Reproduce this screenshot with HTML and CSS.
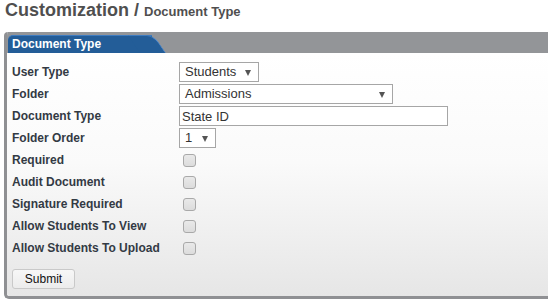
FILE: index.html
```html
<!DOCTYPE html>
<html>
<head>
<meta charset="utf-8">
<link rel="stylesheet" href="styles.css">
</head>
<body>
<h1 class="page-title">Customization / <span class="sub">Document Type</span></h1>
<div class="panel">
  <div class="panel-head"><div class="tab">Document Type</div></div>
  <div class="panel-body">
    <div class="form-grid">
      <label class="lbl">User Type</label>
      <div class="ctl"><span class="select w-students"><span class="sel-text">Students</span></span></div>
      <label class="lbl">Folder</label>
      <div class="ctl"><span class="select w-folder"><span class="sel-text">Admissions</span></span></div>
      <label class="lbl">Document Type</label>
      <div class="ctl"><input class="text-input" type="text" value="State ID"></div>
      <label class="lbl">Folder Order</label>
      <div class="ctl"><span class="select w-order"><span class="sel-text">1</span></span></div>
      <label class="lbl">Required</label>
      <div class="ctl"><input class="chk" type="checkbox"></div>
      <label class="lbl">Audit Document</label>
      <div class="ctl"><input class="chk" type="checkbox"></div>
      <label class="lbl">Signature Required</label>
      <div class="ctl"><input class="chk" type="checkbox"></div>
      <label class="lbl">Allow Students To View</label>
      <div class="ctl"><input class="chk" type="checkbox"></div>
      <label class="lbl">Allow Students To Upload</label>
      <div class="ctl"><input class="chk" type="checkbox"></div>
    </div>
    <button class="submit" type="button">Submit</button>
  </div>
</div>
</body>
</html>
```
FILE: styles.css
```css
html, body {
  margin: 0;
  padding: 0;
  background: #ffffff;
  font-family: "Liberation Sans", Arial, sans-serif;
  overflow: hidden;
}

.page-title {
  margin: 0;
  padding: 0 0 0 5px;
  height: 32px;
  font-size: 18px;
  line-height: 21px;
  font-weight: bold;
  color: #4f4f4f;
}

.page-title .sub {
  font-size: 13px;
}

.panel {
  margin-left: 4px;
  border-left: 3px solid #8f9093;
  border-bottom: 3px solid #8f9093;
  border-radius: 4px 0 0 5px;
  overflow: hidden;
}

.panel-head {
  height: 21px;
  background: #939598;
  display: flex;
  align-items: flex-end;
  padding-left: 1px;
}

.tab {
  position: relative;
  height: 17px;
  width: 140px;
  background: #235d98;
  border-top: 1px solid #3f7cc0;
  border-radius: 5px 0 0 0;
  color: #ffffff;
  font-size: 12px;
  font-weight: bold;
  line-height: 17px;
  padding-left: 4px;
}

.tab::after {
  content: "";
  position: absolute;
  top: -1px;
  right: -14px;
  width: 26px;
  height: 18px;
  background: #235d98;
  border-top: 1px solid #3f7cc0;
  border-right: 1px solid #4d8ad0;
  border-radius: 0 8px 0 0;
  transform: skewX(34deg);
  transform-origin: bottom left;
  box-sizing: border-box;
}

.panel-body {
  background: linear-gradient(to bottom, #ffffff 0%, #fafafa 45%, #e6e6e6 100%);
  padding: 9px 0 7px 5px;
}

.form-grid {
  display: grid;
  grid-template-columns: 167px 1fr;
  grid-auto-rows: 20px;
  row-gap: 2px;
  align-items: center;
}

.lbl {
  font-size: 12px;
  font-weight: bold;
  color: #333a44;
  white-space: nowrap;
}

.ctl {
  display: flex;
  align-items: center;
  height: 20px;
}

.select {
  position: relative;
  display: block;
  box-sizing: border-box;
  height: 20px;
  border: 1px solid #a6a6a6;
  background: #ffffff;
  font-size: 13px;
  line-height: 18px;
  color: #333333;
  padding-left: 5px;
}

.select::after {
  content: "";
  position: absolute;
  right: 7px;
  top: 7px;
  width: 0;
  height: 0;
  border-left: 3.5px solid transparent;
  border-right: 3.5px solid transparent;
  border-top: 6px solid #555555;
}

.w-students { width: 80px; }
.w-folder { width: 214px; }
.w-order { width: 37px; }

.text-input {
  box-sizing: border-box;
  width: 269px;
  height: 20px;
  margin: 0;
  border: 1px solid #a6a6a6;
  padding: 0 0 0 2px;
  font-family: "Liberation Sans", Arial, sans-serif;
  font-size: 13px;
  color: #333333;
  outline: none;
}

.chk {
  appearance: none;
  -webkit-appearance: none;
  margin: 0 0 0 4px;
  width: 13px;
  height: 13px;
  box-sizing: border-box;
  border: 1px solid #a9a9a9;
  border-radius: 3px;
  background: linear-gradient(to bottom, #e9e9e9, #dcdcdc);
}

.submit {
  display: block;
  margin-top: 11px;
  width: 63px;
  height: 20px;
  box-sizing: border-box;
  border: 1px solid #c9c9c9;
  border-radius: 3px;
  background: linear-gradient(to bottom, #f7f7f7, #ececec);
  font-family: "Liberation Sans", Arial, sans-serif;
  font-size: 12px;
  color: #111111;
  padding: 0;
}
```
